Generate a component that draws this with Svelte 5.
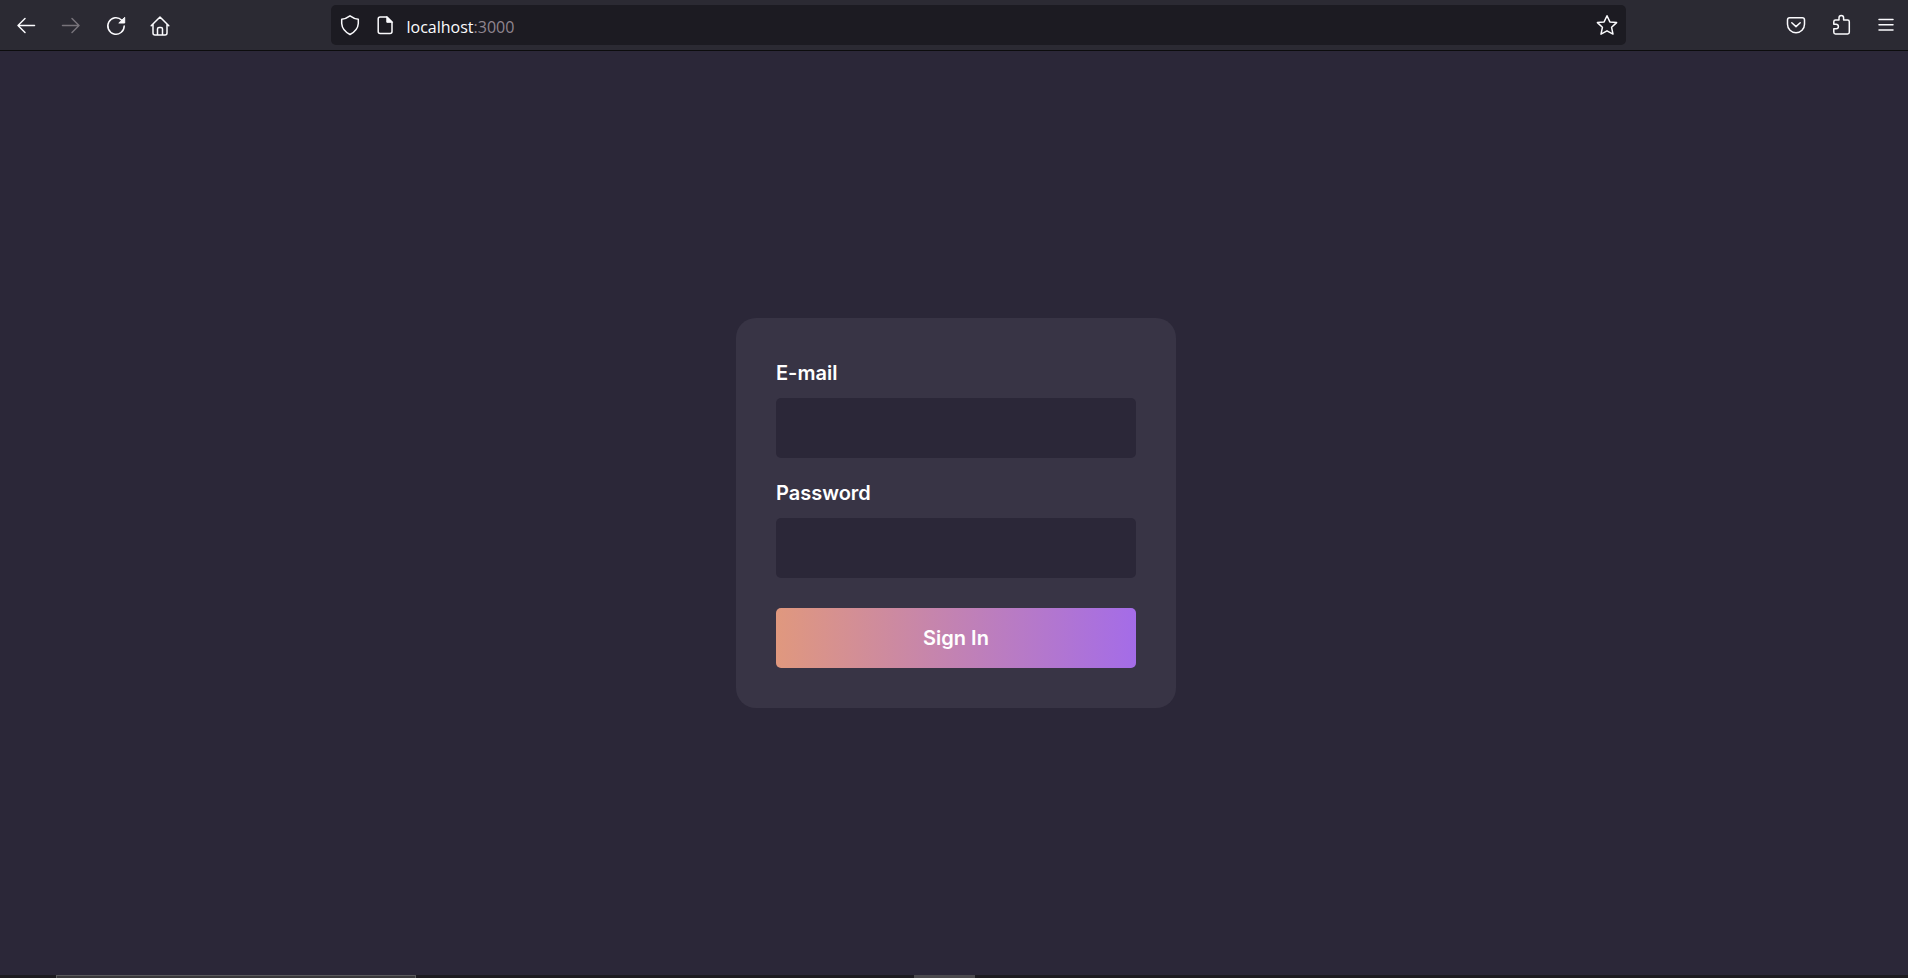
<script>
  let email = $state('');
  let password = $state('');
</script>

<div class="window">
  <header class="toolbar">
    <nav class="group" aria-label="Navigation">
      <button type="button" aria-label="Back">
        <svg viewBox="0 -1 24 24"><path d="M20.500 11.500H4M11 4.500l-7 7 7 7" /></svg>
      </button>
      <button type="button" aria-label="Forward" disabled>
        <svg viewBox="0 -1 24 24"><path d="M3.500 11.500H20M13 4.500l7 7-7 7" /></svg>
      </button>
      <button type="button" aria-label="Reload">
        <svg viewBox="0 -1 24 24"><path d="M17.800 6.200A8.200 8.200 0 1 0 20.200 12" /><path class="solid" d="M20.700 3.700v5.300h-5.500z" /></svg>
      </button>
      <button type="button" aria-label="Home">
        <svg viewBox="1 -1 24 24"><path d="M3.200 11.800L12 3l8.800 8.800M5 10.200v8.800q0 2 2 2h10q2 0 2-2v-8.800M9.500 20.800v-5.800q0-1.500 1.500-1.500h2q1.500 0 1.500 1.500v5.800" /></svg>
      </button>
    </nav>

    <div class="address">
      <button type="button" class="small" aria-label="Tracking protection">
        <svg viewBox="0 0 24 24"><path d="M12 2.800Q16.500 6 20.300 6.300V10.500Q19.800 17.500 12 21.500Q4.200 17.500 3.700 10.500V6.300Q7.500 6 12 2.800z" /></svg>
      </button>
      <button type="button" class="small" aria-label="Site information">
        <svg viewBox="0 0 24 24"><path d="M14 4H7.200q-2 0-2 2v12.500q0 2 2 2h9.800q2 0 2-2V9z" /><path class="solid" d="M13.800 4v5.300h5.300z" /></svg>
      </button>
      <div class="url"><span>localhost</span><span class="port">:3000</span></div>
      <button type="button" class="small" aria-label="Bookmark this page">
        <svg viewBox="0 0 24 24"><path d="M12 2.800l2.900 6.100 6.700.7-5 4.700 1.400 6.800-6-3.300-6 3.300 1.400-6.800-5-4.700 6.700-.7z" /></svg>
      </button>
    </div>

    <div class="group">
      <button type="button" aria-label="Save to Pocket">
        <svg viewBox="0 0 24 24"><path d="M5.700 4.700h12.600q2.200 0 2.200 2.200v4.300a8.500 8.500 0 0 1-17 0V6.900q0-2.200 2.200-2.200zM7.800 9.700l4.200 3.900 4.200-3.900" /></svg>
      </button>
      <button type="button" aria-label="Extensions">
        <svg viewBox="0 0 24 24"><path d="M10 7V4.800a2.300 2.300 0 0 1 4.600 0V7h4q1.700 0 1.700 1.700v10.600q0 1.700-1.700 1.700H6.500q-1.700 0-1.700-1.700v-3.500h2.300a2.300 2.300 0 0 0 0-4.600H4.800V8.700Q4.800 7 6.500 7z" /></svg>
      </button>
      <button type="button" aria-label="Menu">
        <svg viewBox="0 0 24 24"><path d="M5 6.500h14M5 11.700h14M5 17h14" /></svg>
      </button>
    </div>
  </header>

  <main>
    <form onsubmit={(event) => event.preventDefault()}>
      <label for="email">E-mail</label>
      <input id="email" type="email" bind:value={email} />
      <label for="password">Password</label>
      <input id="password" type="password" bind:value={password} />
      <button type="submit" class="submit">Sign In</button>
    </form>
  </main>

  <footer>
    <div class="search"></div>
    <div class="active"></div>
  </footer>
</div>

<style>
  :global(body) {
    margin: 0;
    background: #2b2738;
  }
  .window {
    box-sizing: border-box;
    display: flex;
    flex-direction: column;
    min-height: 100vh;
    font-family: Inter, sans-serif;
  }
  .toolbar {
    display: grid;
    grid-template-columns: auto 3fr 26fr 3fr auto;
    align-items: center;
    padding: 5px 2px 5px 6px;
    background: #2b2a33;
    border-bottom: 1px solid #0c0c0d;
  }
  .toolbar .address {
    grid-column: 3;
  }
  .group {
    display: flex;
    gap: 5px;
  }
  .group:last-child {
    grid-column: 5;
  }
  button {
    padding: 0;
    border: 0;
    background: none;
    font-family: inherit;
  }
  .toolbar button {
    display: flex;
    align-items: center;
    justify-content: center;
    width: 40px;
    height: 40px;
    color: #fbfbfe;
  }
  .toolbar button:disabled {
    color: #77737a;
  }
  .toolbar .small {
    width: 35px;
  }
  svg {
    width: 24px;
    height: 24px;
    fill: none;
    stroke: currentColor;
    stroke-width: 1.5;
    stroke-linecap: round;
    stroke-linejoin: round;
  }
  .solid {
    fill: currentColor;
    stroke-width: 1;
  }
  .address {
    display: flex;
    align-items: center;
    height: 40px;
    padding: 0 2px;
    border-radius: 5px;
    background: #1c1b22;
    color: #fbfbfe;
    font-family: "Open Sans", sans-serif;
    font-size: 16px;
    line-height: 24px;
  }
  .url {
    flex: 1;
    padding: 4px 0 0 4px;
  }
  .port {
    color: #8f8590;
  }
  main {
    flex: 1;
    display: flex;
    align-items: center;
    justify-content: center;
    padding-left: 4px;
  }
  form {
    box-sizing: border-box;
    display: flex;
    flex-direction: column;
    width: 100%;
    max-width: 440px;
    padding: 40px;
    border-radius: 20px;
    background: #383445;
  }
  label {
    margin-bottom: 10px;
    color: #fff;
    font-size: 20px;
    font-weight: 600;
    line-height: 30px;
  }
  input {
    box-sizing: border-box;
    width: 100%;
    height: 60px;
    margin: 0 0 20px;
    padding: 0 20px;
    border: 0;
    border-radius: 5px;
    outline: 0;
    background: #2b2738;
    color: #fff;
    font: 20px Inter, sans-serif;
  }
  .submit {
    height: 60px;
    margin-top: 10px;
    border-radius: 5px;
    background: linear-gradient(90deg, #e0987e, #a46ce8);
    color: #fff;
    font-size: 20px;
    font-weight: 600;
  }
  footer {
    display: grid;
    grid-template-columns: 56px 360px 498fr 61px 933fr;
    height: 3px;
    background: #1d1b20;
  }
  .search {
    grid-column: 2;
    box-sizing: border-box;
    border: 1px solid #5b5a5c;
    border-bottom: 0;
    background: #39383b;
  }
  .active {
    grid-column: 4;
    background: #4b494d;
  }
</style>
